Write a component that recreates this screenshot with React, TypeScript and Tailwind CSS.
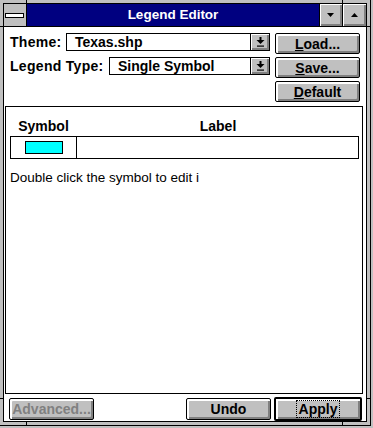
import React from 'react';

const bevel =
  'shadow-[inset_1px_1px_0_#fff,inset_2px_2px_0_#fff,inset_-1px_-1px_0_#808080,inset_-2px_-2px_0_#808080]';
const smallBevel = 'shadow-[inset_1px_1px_0_#fff,inset_-1px_-1px_0_#808080,inset_-2px_-2px_0_#808080]';

const PushButton: React.FC<{
  children: React.ReactNode;
  className?: string;
  disabled?: boolean;
  isDefault?: boolean;
}> = ({ children, className = '', disabled, isDefault }) => (
  <div
    className={`flex items-center justify-center bg-[#c0c0c0] border-black rounded-[2px] ${
      isDefault ? 'border-2' : 'border'
    } ${bevel} ${className}`}
  >
    <span
      className={`text-[14px] leading-[16px] font-bold ${disabled ? 'text-[#808080]' : 'text-black'}`}
    >
      {children}
    </span>
  </div>
);

const ComboArrow = () => (
  <svg width="9" height="10" viewBox="0 0 9 10" className="block">
    <rect x="3.5" y="0" width="2" height="3" fill="#000" />
    <polygon points="0.5,3 8.5,3 4.5,7" fill="#000" />
    <rect x="1" y="8.5" width="7" height="1.2" fill="#000" />
  </svg>
);

const Combo: React.FC<{ value: string; width: string }> = ({ value, width }) => (
  <div className={`flex h-[18px] ${width} border border-black bg-white`}>
    <div className="flex-1 pl-[8px] text-[14px] leading-[16px] font-bold">{value}</div>
    <div className={`flex w-[19px] items-center justify-center border-l border-black bg-[#c0c0c0] ${smallBevel}`}>
      <ComboArrow />
    </div>
  </div>
);

const TitleButton: React.FC<{ up?: boolean; className?: string }> = ({ up, className = '' }) => (
  <div className={`flex items-center justify-center bg-[#c0c0c0] pr-[1px] pb-[1px] ${smallBevel} ${className}`}>
    <svg width="7" height="4" viewBox="0 0 7 4" className="block">
      <polygon points={up ? '0,4 7,4 3.5,0' : '0,0 7,0 3.5,4'} fill="#000" />
    </svg>
  </div>
);

export default function App() {
  return (
    <div className="relative w-[373px] h-[428px] overflow-hidden bg-[#c0c0c0] font-['Liberation_Sans',Arial,sans-serif] text-black">
      <div className="-ml-px -mt-px w-[372px] h-[427px] border border-black bg-[#c0c0c0] p-[3px]">
        <div className="flex h-full flex-col border border-black">
          {/* caption */}
          <div className="flex h-[23px] border-b border-black">
            <div className="flex w-[23px] border-r border-black bg-[#c0c0c0] pl-[1px] pt-[9px]">
              <div className="h-[5px] w-[19px] border border-black bg-white" />
            </div>
            <div className="flex flex-1 items-center justify-center bg-[#000080] text-[13.5px] leading-[16px] font-bold text-white">
              Legend Editor
            </div>
            <TitleButton className="w-[24px] border-x border-black" />
            <TitleButton up className="w-[23px]" />
          </div>

          {/* client */}
          <div className="flex flex-1 flex-col bg-white">
            <div className="flex pt-[6px] pl-[6px]">
              <div className="flex w-[260px] flex-col gap-[3px]">
                <div className="flex h-[21px] items-start justify-between">
                  <span className="mt-[1px] text-[14px] leading-[16px] font-bold tracking-[0.3px]">Theme:</span>
                  <Combo value="Texas.shp" width="w-[204px]" />
                </div>
                <div className="flex h-[21px] items-start justify-between">
                  <span className="mt-[1px] text-[14px] leading-[16px] font-bold tracking-[0.3px]">Legend Type:</span>
                  <Combo value="Single Symbol" width="w-[161px]" />
                </div>
              </div>
              <div className="ml-[5px] flex flex-col gap-[3px]">
                <PushButton className="h-[21px] w-[85px]">
                  <u>L</u>oad...
                </PushButton>
                <PushButton className="h-[21px] w-[85px]">
                  <u>S</u>ave...
                </PushButton>
                <PushButton className="h-[21px] w-[85px]">
                  <u>D</u>efault
                </PushButton>
              </div>
            </div>

            {/* legend list */}
            <div className="mt-[4px] ml-[1px] mr-[3px] flex flex-1 flex-col border border-black pt-[11px] pl-[4px] pr-[3px]">
              <div className="flex h-[16px] text-[14px] leading-[16px] font-bold">
                <div className="w-[67px] text-center">Symbol</div>
                <div className="flex-1 text-center">Label</div>
              </div>
              <div className="mt-[2px] flex h-[23px] border border-black">
                <div className="flex w-[66px] items-center justify-center border-r border-black pl-[1px]">
                  <div className="h-[13px] w-[38px] border border-black bg-[#00ffff]" />
                </div>
                <div className="flex-1" />
              </div>
              <p className="mt-[11px] text-[13.5px] leading-[16px]">Double click the symbol to edit i</p>
            </div>

            <div className="mt-[3px] flex h-[24px] items-center gap-[3px] pl-[5px] pr-[4px]">
              <PushButton disabled className="h-[22px] w-[85px]">
                Advanced...
              </PushButton>
              <PushButton className="ml-auto h-[22px] w-[85px]">Undo</PushButton>
              <PushButton isDefault className="h-[24px] w-[88px]">
                <span className="border border-dotted border-black px-[2px] leading-[15px]">Apply</span>
              </PushButton>
            </div>
          </div>
        </div>
      </div>

      {/* frame sizing ticks */}
      <div className="absolute left-[26px] top-0 h-[3px] w-px bg-black" />
      <div className="absolute left-[342px] top-0 h-[3px] w-px bg-black" />
      <div className="absolute left-0 top-[26px] h-px w-[3px] bg-black" />
      <div className="absolute left-0 top-[398px] h-px w-[3px] bg-black" />
      <div className="absolute left-[367px] top-[26px] h-px w-[3px] bg-black" />
      <div className="absolute left-[367px] top-[398px] h-px w-[3px] bg-black" />
      <div className="absolute left-[26px] top-[422px] h-[3px] w-px bg-black" />
      <div className="absolute left-[342px] top-[422px] h-[3px] w-px bg-black" />
    </div>
  );
}
